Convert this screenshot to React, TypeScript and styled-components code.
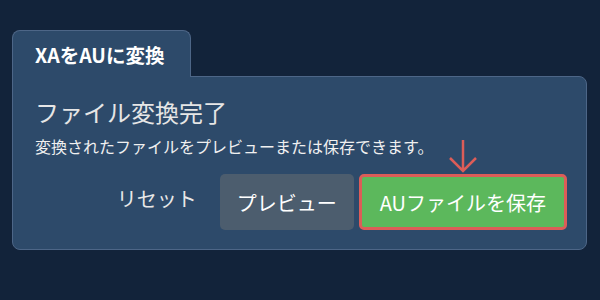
import styled, { createGlobalStyle } from "styled-components"

const GlobalStyle = createGlobalStyle`
    html, body {
        margin: 0;
        padding: 0;
        background-color: #12233a;
        font-family: "Noto Sans CJK JP", "Noto Sans", sans-serif;
        color: #ececec;
    }
`

const Page = styled.div`
    width: 600px;
    height: 300px;
    padding: 30px 13px 0 12px;
    box-sizing: border-box;
`

const Tab = styled.div`
    position: relative;
    z-index: 1;
    width: 179px;
    height: 47px;
    box-sizing: border-box;
    margin-bottom: -1px;
    padding-left: 22px;
    display: flex;
    align-items: center;
    background-color: #2d4a6a;
    border: 1px solid #4d6687;
    border-bottom: none;
    border-radius: 8px 8px 0 0;
    font-size: 19.5px;
    font-weight: bold;
    color: #ffffff;
`

const Panel = styled.div`
    position: relative;
    height: 174px;
    box-sizing: border-box;
    padding: 18px 19px 19px 22px;
    background-color: #2d4a6a;
    border: 1px solid #4d6687;
    border-radius: 0 8px 8px 8px;
    display: flex;
    flex-direction: column;
`

const Titulo = styled.h2`
    margin: 0;
    font-size: 24px;
    font-weight: normal;
    line-height: 34px;
    color: #e6e6e6;
`

const Descricao = styled.p`
    margin: 6px 0 0;
    font-size: 16px;
    line-height: 22px;
    color: #f0f0f0;
`

const Acoes = styled.div`
    margin-top: auto;
    display: flex;
    justify-content: flex-end;
    align-items: center;
    gap: 5px;
`

const BotaoTexto = styled.button`
    background: none;
    border: none;
    padding: 0 18px 8px 0;
    font-family: inherit;
    font-size: 20px;
    color: #e8e8e8;
    cursor: pointer;
`

const Botao = styled.button<{ $principal?: boolean }>`
    position: relative;
    height: 56px;
    box-sizing: border-box;
    padding: 0 ${p => (p.$principal ? "18px" : "17px")};
    border: ${p => (p.$principal ? "3px solid #dc5d58" : "none")};
    border-radius: 5px;
    background-color: ${p => (p.$principal ? "#5cb85c" : "#4c5d6e")};
    font-family: inherit;
    font-size: 20px;
    color: #ffffff;
    cursor: pointer;
`

const Seta = styled.svg`
    position: absolute;
    left: 50%;
    top: -39px;
    transform: translateX(-50%);
`

export default function App() {
    return (
        <>
            <GlobalStyle />
            <Page>
                <Tab>XAをAUに変換</Tab>
                <Panel>
                    <Titulo>ファイル変換完了</Titulo>
                    <Descricao>変換されたファイルをプレビューまたは保存できます。</Descricao>
                    <Acoes>
                        <BotaoTexto>リセット</BotaoTexto>
                        <Botao>プレビュー</Botao>
                        <Botao $principal>
                            AUファイルを保存
                            <Seta width="30" height="36" viewBox="0 0 30 36">
                                <path d="M15 2 V33 M2 20 L15 33 L28 20" fill="none" stroke="#dc5d58" strokeWidth="2.5" />
                            </Seta>
                        </Botao>
                    </Acoes>
                </Panel>
            </Page>
        </>
    )
}
